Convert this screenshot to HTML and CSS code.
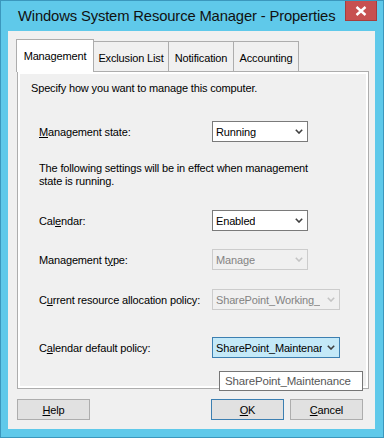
FILE: index.html
```html
<!DOCTYPE html>
<html>
<head>
<meta charset="utf-8">
<link rel="stylesheet" href="styles.css">
</head>
<body>
<div class="window">
  <div class="titlebar">
    <span class="title">Windows System Resource Manager - Properties</span>
    <div class="close">
      <svg width="12" height="10" viewBox="0 0 12 10"><path d="M1.5 1 L10.5 9 M10.5 1 L1.5 9" stroke="#ffffff" stroke-width="2.4" fill="none"/></svg>
    </div>
  </div>
  <div class="client">
    <div class="tabs">
      <div class="tab active t1">Management</div>
      <div class="tab t2">Exclusion List</div>
      <div class="tab t3">Notification</div>
      <div class="tab t4">Accounting</div>
    </div>
    <div class="panel">
      <div class="page">
        <p class="intro">Specify how you want to manage this computer.</p>
        <div class="row r1">
          <span class="label"><u>M</u>anagement state:</span>
          <div class="combo narrow"><span class="val">Running</span><svg class="chev" width="8" height="5" viewBox="0 0 8 5"><path d="M0.8 0.8 L4 4 L7.2 0.8" stroke="#404040" stroke-width="1.6" fill="none"/></svg></div>
        </div>
        <p class="note">The following settings will be in effect when management<br>state is running.</p>
        <div class="row r2">
          <span class="label">Cal<u>e</u>ndar:</span>
          <div class="combo narrow"><span class="val">Enabled</span><svg class="chev" width="8" height="5" viewBox="0 0 8 5"><path d="M0.8 0.8 L4 4 L7.2 0.8" stroke="#404040" stroke-width="1.6" fill="none"/></svg></div>
        </div>
        <div class="row r3">
          <span class="label">Management t<u>y</u>pe:</span>
          <div class="combo narrow disabled"><span class="val">Manage</span><svg class="chev" width="8" height="5" viewBox="0 0 8 5"><path d="M0.8 0.8 L4 4 L7.2 0.8" stroke="#c4c4c4" stroke-width="1.6" fill="none"/></svg></div>
        </div>
        <div class="row r4">
          <span class="label">C<u>u</u>rrent resource allocation policy:</span>
          <div class="combo wide disabled"><span class="val">SharePoint_Working_</span><svg class="chev" width="8" height="5" viewBox="0 0 8 5"><path d="M0.8 0.8 L4 4 L7.2 0.8" stroke="#c4c4c4" stroke-width="1.6" fill="none"/></svg></div>
        </div>
        <div class="row r5">
          <span class="label">C<u>a</u>lendar default policy:</span>
          <div class="combo wide hot"><span class="val">SharePoint_Maintenar</span><svg class="chev" width="8" height="5" viewBox="0 0 8 5"><path d="M0.8 0.8 L4 4 L7.2 0.8" stroke="#404040" stroke-width="1.6" fill="none"/></svg></div>
        </div>
      </div>
      <div class="tooltip">SharePoint_Maintenance</div>
    </div>
    <div class="buttons">
      <div class="btn"><u>H</u>elp</div>
      <div class="spacer"></div>
      <div class="btn default"><u>O</u>K</div>
      <div class="btn"><u>C</u>ancel</div>
    </div>
  </div>
</div>
</body>
</html>
```
FILE: styles.css
```css
* { box-sizing: border-box; }
html, body { margin: 0; padding: 0; }
body {
  width: 384px;
  height: 438px;
  overflow: hidden;
  font-family: "Liberation Sans", Arial, sans-serif;
  font-size: 11px;
  letter-spacing: -0.15px;
  color: #000;
}
.window {
  width: 384px;
  height: 438px;
  background: #5fc9ea;
  border: 1px solid #3b97bd;
  padding: 0 8px 8px 7px;
  display: flex;
  flex-direction: column;
}
.titlebar {
  height: 30px;
  display: flex;
  align-items: flex-start;
  position: relative;
}
.title {
  font-size: 14.8px;
  letter-spacing: -0.15px;
  margin-left: 10px;
  margin-top: 7px;
  color: #111;
  white-space: nowrap;
}
.close {
  position: absolute;
  right: -2px;
  top: 0;
  width: 32px;
  height: 20px;
  background: #c75050;
  border: 1px solid #a63d3d;
  border-top: none;
  display: flex;
  align-items: center;
  justify-content: center;
}
.client {
  flex: 1;
  background: #f0f0f0;
  padding: 8px 6px 0 9px;
  display: flex;
  flex-direction: column;
}
.tabs {
  height: 32px;
  display: flex;
  align-items: flex-end;
  margin-left: -1px;
}
.tab {
  height: 30px;
  border: 1px solid #adadad;
  border-bottom: none;
  background: #f0f0f0;
  display: flex;
  align-items: center;
  justify-content: center;
  margin-left: -1px;
  white-space: nowrap;
  padding-top: 2px;
}
.tab:first-child { margin-left: 0; }
.tab.active {
  height: 33px;
  margin-bottom: -1px;
  background: #ffffff;
  position: relative;
  z-index: 1;
  padding-top: 0;
}
.t1 { width: 78px; }
.t2 { width: 76px; }
.t3 { width: 66px; }
.t4 { width: 66px; }
.panel {
  height: 318px;
  border: 1px solid #adadad;
  background: #ffffff;
  padding: 2px;
  position: relative;
}
.page {
  height: 100%;
  background: #f0f0f0;
  padding: 7px 0 0 11px;
}
.intro {
  margin: 0;
  line-height: 15px;
}
.row {
  display: grid;
  grid-template-columns: 173px auto;
  align-items: center;
  margin-left: 8px;
}
.r1 { margin-top: 25px; }
.r2 { margin-top: 22px; }
.r3 { margin-top: 18px; }
.r4 { margin-top: 19px; }
.r5 { margin-top: 27px; }
.note {
  margin: 20px 0 0 8px;
  line-height: 13px;
}
.combo {
  height: 21px;
  border: 1px solid #7a7a7a;
  background: #ffffff;
  display: flex;
  align-items: center;
  padding: 0 4px 0 3px;
  justify-content: space-between;
  white-space: nowrap;
  overflow: hidden;
}
.combo.narrow { width: 96px; }
.combo.wide { width: 128px; }
.combo.disabled {
  border-color: #cccccc;
  background: #f0f0f0;
  color: #838383;
}
.combo.hot {
  border-color: #3c7fb1;
  background: #c4e9f8;
}
.val { overflow: hidden; }
.chev { flex: none; }
.tooltip {
  position: absolute;
  left: 201px;
  top: 299px;
  width: 144px;
  height: 20px;
  border: 1px solid #767676;
  background: #ffffff;
  color: #575757;
  font-size: 11.5px;
  display: flex;
  align-items: center;
  padding-left: 5px;
  white-space: nowrap;
  z-index: 2;
}
.buttons {
  display: flex;
  margin-top: 10px;
  margin-left: 0;
}
.spacer { flex: 1; }
.btn {
  height: 21px;
  width: 73px;
  border: 1px solid #adadad;
  background: #e1e1e1;
  display: flex;
  align-items: center;
  justify-content: center;
}
.btn.default {
  border-color: #3c7fb1;
  margin-right: 6px;
}
.buttons .btn:last-child { margin-right: 6px; }
```
